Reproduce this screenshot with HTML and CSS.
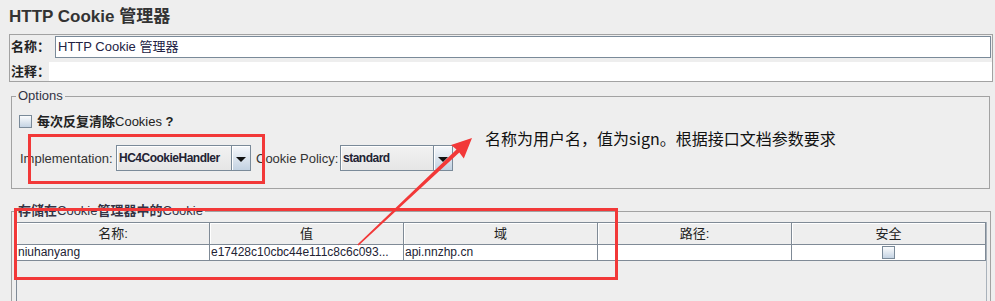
FILE: index.html
```html
<!DOCTYPE html>
<html lang="zh-CN">
<head>
<meta charset="utf-8">
<title>HTTP Cookie 管理器</title>
<link rel="stylesheet" href="styles.css">
</head>
<body>
<div class="page">
  <h1 class="title">HTTP Cookie 管理器</h1>

  <div class="name-panel">
    <div class="row row-name">
      <span class="lbl lbl-name">名称：</span>
      <div class="field">HTTP Cookie 管理器</div>
    </div>
    <div class="row row-comment">
      <span class="lbl lbl-comment">注释：</span>
      <div class="field-plain"></div>
    </div>
  </div>

  <fieldset class="group options">
    <legend class="legend">Options</legend>
    <div class="check-row">
      <span class="checkbox"></span>
      <span class="check-label"><b class="cjk">每次反复清除</b>Cookies <b class="q">?</b></span>
    </div>
    <div class="combo-row">
      <span class="clbl clbl-impl">Implementation:</span>
      <div class="combo combo-impl">
        <span class="combo-text">HC4CookieHandler</span>
        <span class="combo-btn"><i class="tri"></i></span>
      </div>
      <span class="clbl clbl-policy">Cookie Policy:</span>
      <div class="combo combo-policy">
        <span class="combo-text">standard</span>
        <span class="combo-btn"><i class="tri"></i></span>
      </div>
    </div>
  </fieldset>

  <fieldset class="group cookies">
    <legend class="legend"><b class="cjk">存储在</b>Cookie<b class="cjk">管理器中的</b>Cookie</legend>
    <div class="scroll">
      <div class="thead">
        <div class="th">名称:</div>
        <div class="th">值</div>
        <div class="th">域</div>
        <div class="th">路径:</div>
        <div class="th">安全</div>
      </div>
      <div class="trow">
        <div class="td">niuhanyang</div>
        <div class="td">e17428c10cbc44e111c8c6c093...</div>
        <div class="td">api.nnzhp.cn</div>
        <div class="td"></div>
        <div class="td td-check"><span class="checkbox"></span></div>
      </div>
    </div>
  </fieldset>
</div>

<div class="mark mark-impl"></div>
<div class="mark mark-table"></div>
<svg class="arrow" width="995" height="301" viewBox="0 0 995 301">
  <polygon points="472,138 451,145 456.5,149.6 357.4,244.6 358.6,245.4 459.3,152.6 463.8,158.4" fill="#f23838"/>
</svg>
<div class="note">名称为用户名，值为sign。根据接口文档参数要求</div>
</body>
</html>
```

FILE: styles.css
```css
html, body {
  margin: 0;
  padding: 0;
}
body {
  width: 995px;
  height: 301px;
  overflow: hidden;
  position: relative;
  background: #eeeeee;
  font-family: "Liberation Sans", "Noto Sans CJK SC", sans-serif;
  font-size: 13px;
  color: #333333;
}
.page {
  display: flex;
  flex-direction: column;
}
.title {
  margin: 0;
  padding: 7px 0 0 9px;
  font-size: 17px;
  line-height: 20px;
  font-weight: bold;
  color: #333333;
}

/* name / comment panel */
.name-panel {
  margin: 7px 2px 0 9px;
  height: 48px;
  box-sizing: border-box;
  border: 1px solid #a2a2a2;
  display: flex;
  flex-direction: column;
}
.row {
  display: flex;
  align-items: center;
}
.row-name {
  margin-top: 1px;
  height: 22px;
}
.row-comment {
  margin-top: 4px;
  height: 19px;
}
.lbl {
  box-sizing: border-box;
  padding-left: 1px;
  font-weight: bold;
  font-size: 13px;
  line-height: 16px;
  color: #222;
  white-space: nowrap;
  flex: none;
}
.lbl-name { width: 45px; }
.lbl-comment { width: 39px; }
.field {
  flex: 1;
  height: 22px;
  box-sizing: border-box;
  margin-right: 1px;
  border: 1px solid #7a8a99;
  background: #fff;
  padding-left: 2px;
  line-height: 20px;
  font-size: 13px;
  color: #222244;
}
.field-plain {
  flex: 1;
  height: 19px;
  background: #fff;
}

/* titled groups */
.group {
  margin: 0;
  padding: 0;
  border: 1px solid #a2a2a2;
  min-width: 0;
}
.legend {
  margin-left: 4px;
  padding: 0 2px;
  font-size: 13px;
  line-height: 16px;
  color: #333344;
  white-space: nowrap;
}
.cjk { font-weight: bold; }
.options {
  margin: 6px 5px 0 11px;
}
.check-row {
  margin: 11px 0 0 7px;
  height: 13px;
  display: flex;
  align-items: center;
}
.checkbox {
  display: block;
  width: 13px;
  height: 13px;
  box-sizing: border-box;
  border: 1px solid #7a8a99;
  background: linear-gradient(#fbfcfd, #c4d3e3);
  flex: none;
}
.check-label {
  margin-left: 5px;
  font-size: 13px;
  line-height: 16px;
  color: #222;
  white-space: nowrap;
}
.q { font-weight: bold; }
.combo-row {
  margin: 17px 0 17px 8px;
  height: 26px;
  display: flex;
  align-items: center;
}
.clbl {
  font-size: 13px;
  color: #333;
  white-space: nowrap;
  flex: none;
}
.clbl-impl { width: 96px; }
.clbl-policy { width: 84px; margin-left: 5px; }
.combo {
  height: 26px;
  box-sizing: border-box;
  border: 1px solid #7a8a99;
  background: linear-gradient(#f2f2f2, #e6e6e6);
  display: flex;
  flex: none;
}
.combo-impl { width: 135px; }
.combo-policy { width: 113px; }
.combo-text {
  flex: 1;
  padding-left: 2px;
  font-size: 12px;
  font-weight: bold;
  letter-spacing: -0.5px;
  line-height: 24px;
  color: #222233;
  white-space: nowrap;
  box-shadow: inset 1px 1px 0 #fff;
}
.combo-btn {
  width: 19px;
  box-sizing: border-box;
  border-left: 1px solid #7a8a99;
  background: linear-gradient(#f6f8fb, #c3d2e2);
  display: flex;
  align-items: center;
  justify-content: center;
  box-shadow: inset 1px 1px 0 #fff;
}
.tri {
  display: block;
  width: 0;
  height: 0;
  border-left: 5px solid transparent;
  border-right: 5px solid transparent;
  border-top: 5px solid #111;
  margin-top: 2px;
}

/* cookie table */
.cookies {
  margin: 14px 4px 0 11px;
  height: 98px;
  box-sizing: border-box;
  border-bottom: none;
}
.scroll {
  margin: 3px 3px 0 4px;
  height: 79px;
  border-left: 1px solid #7f8a96;
  border-right: 1px solid #a9b2bb;
}
.thead, .trow {
  display: grid;
  grid-template-columns: 193px 194px 194px 194px 194px;
}
.thead {
  border-top: 1px solid #7f8a96;
}
.th {
  height: 22px;
  box-sizing: border-box;
  border-right: 1px solid #7f8a96;
  border-bottom: 1px solid #7f8a96;
  background: #eeeeee;
  box-shadow: inset 1px 1px 0 #fff;
  text-align: center;
  font-size: 13px;
  line-height: 21px;
  color: #222;
}
.td {
  height: 16px;
  box-sizing: border-box;
  border-right: 1px solid #7f8a96;
  border-bottom: 1px solid #7f8a96;
  background: #fff;
  padding-left: 1px;
  font-size: 12px;
  line-height: 15px;
  color: #222233;
  white-space: nowrap;
  overflow: hidden;
}
.td-check {
  display: flex;
  justify-content: center;
  align-items: flex-start;
  padding: 1px 0 0;
}

/* annotations overlaid on the screenshot */
.mark {
  position: absolute;
  box-sizing: border-box;
  border: 3px solid #f23838;
}
.mark-impl {
  left: 28px;
  top: 134px;
  width: 237px;
  height: 50px;
}
.mark-table {
  left: 14px;
  top: 208px;
  width: 604px;
  height: 72px;
}
.arrow {
  position: absolute;
  left: 0;
  top: 0;
}
.note {
  position: absolute;
  left: 485px;
  top: 128px;
  font-family: "Noto Sans CJK SC", sans-serif;
  font-size: 16px;
  line-height: 20px;
  color: #111;
  white-space: nowrap;
}
```
